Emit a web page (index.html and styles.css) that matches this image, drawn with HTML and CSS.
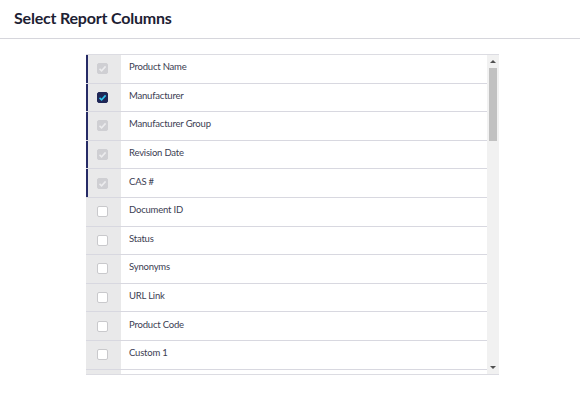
FILE: index.html
```html
<!DOCTYPE html>
<html>
  <head>
    <meta name='viewport' content='width=device-width, initial-scale=1'>
    <title>Select Report Columns</title>
    <link rel="stylesheet" href="styles.css">
  </head>
<body>

<div class='header'>
  <h1 class='title'>Select Report Columns</h1>
</div>

<div class='picker'>
  <div class='rows'>
    <div class='row on'><span class='cell'><span class='box locked'><svg viewBox='0 0 11 11'><polyline points='2.5,5.8 4.6,7.8 8.6,3.4'/></svg></span></span><span class='label'>Product Name</span></div>
    <div class='row on'><span class='cell'><span class='box checked'><svg viewBox='0 0 11 11'><polyline points='2.5,5.8 4.6,7.8 8.6,3.4'/></svg></span></span><span class='label'>Manufacturer</span></div>
    <div class='row on'><span class='cell'><span class='box locked'><svg viewBox='0 0 11 11'><polyline points='2.5,5.8 4.6,7.8 8.6,3.4'/></svg></span></span><span class='label'>Manufacturer Group</span></div>
    <div class='row on'><span class='cell'><span class='box locked'><svg viewBox='0 0 11 11'><polyline points='2.5,5.8 4.6,7.8 8.6,3.4'/></svg></span></span><span class='label'>Revision Date</span></div>
    <div class='row on'><span class='cell'><span class='box locked'><svg viewBox='0 0 11 11'><polyline points='2.5,5.8 4.6,7.8 8.6,3.4'/></svg></span></span><span class='label'>CAS #</span></div>
    <div class='row'><span class='cell'><span class='box'></span></span><span class='label'>Document ID</span></div>
    <div class='row'><span class='cell'><span class='box'></span></span><span class='label'>Status</span></div>
    <div class='row'><span class='cell'><span class='box'></span></span><span class='label'>Synonyms</span></div>
    <div class='row'><span class='cell'><span class='box'></span></span><span class='label'>URL Link</span></div>
    <div class='row'><span class='cell'><span class='box'></span></span><span class='label'>Product Code</span></div>
    <div class='row'><span class='cell'><span class='box'></span></span><span class='label'>Custom 1</span></div>
    <div class='row'><span class='cell'></span></div>
  </div>
  <div class='scrollbar'>
    <span class='arrow up'></span>
    <div class='track'><div class='thumb'></div></div>
    <span class='arrow down'></span>
  </div>
</div>

</body>
</html>
```

FILE: styles.css
```css
* {box-sizing: border-box;}

body {margin: 0; background-color: #fff; font-family: Lato, 'Open Sans', sans-serif; color: #3b3d52;}

.header {padding: 6px 14px 8px; border-bottom: 1px solid #d6d6dc;}
.title {margin: 0; font-size: 16px; line-height: 24px; font-weight: 700; letter-spacing: -0.2px; color: #1d2133;}

.picker {display: flex; width: 413px; height: 321px; margin: 15px 0 0 86px; border-top: 1px solid #dcdce2; border-bottom: 1px solid #dcdce2; overflow: hidden;}

.rows {flex: 1; overflow: hidden;}
.row {display: flex; align-items: center; height: 28.6px; border-bottom: 1px solid #d8d8e0;}
.cell {display: flex; align-items: center; align-self: stretch; width: 35px; padding-left: 9px; background-color: #e9e9ea; border-left: 2px solid #e9e9ea;}
.row.on .cell {border-left-color: #262b66;}
.label {padding: 0 0 4px 8px; font-size: 9.5px; letter-spacing: -0.2px;}

/* checkbox states: empty, greyed out (always on), ticked */
.box {display: block; width: 11px; height: 11px; background: #fff; border: 1px solid #c9c9cc; border-radius: 2px;}
.box svg {display: block; width: 11px; height: 11px; margin: -1px; fill: none; stroke-width: 1.6;}
.box.locked {background: #cfcfd3; border-color: #cfcfd3;}
.box.locked svg {stroke: #ececee;}
.box.checked {background: #1f2757; border-color: #1f2757;}
.box.checked svg {stroke: #2fc3ee;}

.scrollbar {display: flex; flex-direction: column; width: 12px; background: #f1f1f1;}
.track {flex: 1; padding: 0 2px;}
.thumb {height: 73px; background: #c1c1c1;}
.arrow {display: flex; justify-content: center; align-items: center; height: 13px;}
.arrow:after {content: ''; border-left: 3px solid transparent; border-right: 3px solid transparent;}
.arrow.up:after {border-bottom: 3px solid #505050;}
.arrow.down:after {border-top: 3px solid #505050;}
```
